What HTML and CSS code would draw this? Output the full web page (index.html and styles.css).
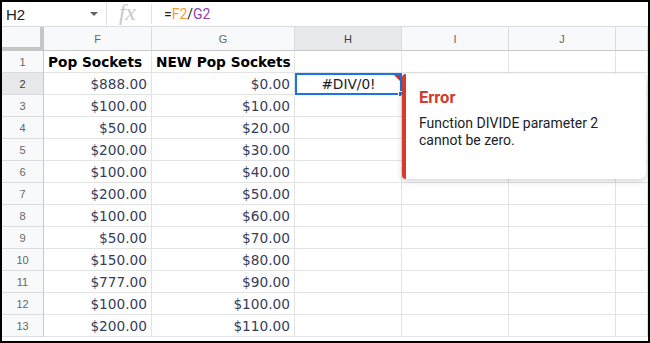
FILE: index.html
```html
<!DOCTYPE html>
<html lang="en">
<head>
    <meta charset="UTF-8">
    <title>Sheet - DIV/0 error</title>
    <link rel="stylesheet" href="styles.css">
</head>
<body>
    <div class="frame">
        <!-- Formula bar -->
        <div class="formula-bar">
            <div class="name-box">
                <span>H2</span>
                <span class="caret"></span>
            </div>
            <div class="fx">fx</div>
            <div class="formula">=<span class="ref-f">F2</span>/<span class="ref-g">G2</span></div>
        </div>

        <!-- Grid -->
        <div class="grid-wrap">
            <div class="grid">
                <div class="corner"></div>
                <div class="col-head">F</div>
                <div class="col-head">G</div>
                <div class="col-head active">H</div>
                <div class="col-head">I</div>
                <div class="col-head">J</div>
                <div class="col-head"></div>

                <div class="row-head">1</div>
                <div class="cell bold">Pop Sockets</div>
                <div class="cell bold">NEW Pop Sockets</div>
                <div class="cell"></div><div class="cell"></div><div class="cell"></div><div class="cell"></div>

                <div class="row-head active">2</div>
                <div class="cell num">$888.00</div>
                <div class="cell num">$0.00</div>
                <div class="cell selected">#DIV/0!<span class="err-mark"></span><span class="handle"></span></div>
                <div class="cell"></div><div class="cell"></div><div class="cell"></div>

                <div class="row-head">3</div>
                <div class="cell num">$100.00</div><div class="cell num">$10.00</div>
                <div class="cell"></div><div class="cell"></div><div class="cell"></div><div class="cell"></div>

                <div class="row-head">4</div>
                <div class="cell num">$50.00</div><div class="cell num">$20.00</div>
                <div class="cell"></div><div class="cell"></div><div class="cell"></div><div class="cell"></div>

                <div class="row-head">5</div>
                <div class="cell num">$200.00</div><div class="cell num">$30.00</div>
                <div class="cell"></div><div class="cell"></div><div class="cell"></div><div class="cell"></div>

                <div class="row-head">6</div>
                <div class="cell num">$100.00</div><div class="cell num">$40.00</div>
                <div class="cell"></div><div class="cell"></div><div class="cell"></div><div class="cell"></div>

                <div class="row-head">7</div>
                <div class="cell num">$200.00</div><div class="cell num">$50.00</div>
                <div class="cell"></div><div class="cell"></div><div class="cell"></div><div class="cell"></div>

                <div class="row-head">8</div>
                <div class="cell num">$100.00</div><div class="cell num">$60.00</div>
                <div class="cell"></div><div class="cell"></div><div class="cell"></div><div class="cell"></div>

                <div class="row-head">9</div>
                <div class="cell num">$50.00</div><div class="cell num">$70.00</div>
                <div class="cell"></div><div class="cell"></div><div class="cell"></div><div class="cell"></div>

                <div class="row-head">10</div>
                <div class="cell num">$150.00</div><div class="cell num">$80.00</div>
                <div class="cell"></div><div class="cell"></div><div class="cell"></div><div class="cell"></div>

                <div class="row-head">11</div>
                <div class="cell num">$777.00</div><div class="cell num">$90.00</div>
                <div class="cell"></div><div class="cell"></div><div class="cell"></div><div class="cell"></div>

                <div class="row-head">12</div>
                <div class="cell num">$100.00</div><div class="cell num">$100.00</div>
                <div class="cell"></div><div class="cell"></div><div class="cell"></div><div class="cell"></div>

                <div class="row-head">13</div>
                <div class="cell num">$200.00</div><div class="cell num">$110.00</div>
                <div class="cell"></div><div class="cell"></div><div class="cell"></div><div class="cell"></div>
            </div>

            <!-- Error tooltip -->
            <div class="error-popup">
                <div class="error-title">Error</div>
                <div class="error-text">Function DIVIDE parameter 2<br>cannot be zero.</div>
            </div>
        </div>
    </div>
</body>
</html>
```

FILE: styles.css
```css
* {
    margin: 0;
    padding: 0;
    box-sizing: border-box;
}

body {
    width: 650px;
    height: 343px;
    overflow: hidden;
    background-color: #000;
    font-family: "Liberation Sans", Arial, sans-serif;
}

.frame {
    width: 650px;
    height: 343px;
    border: 2px solid #000;
    background-color: #fff;
    overflow: hidden;
}

/* Formula bar */
.formula-bar {
    display: flex;
    align-items: center;
    height: 25px;
    border-bottom: 1px solid #dadce0;
    background-color: #fff;
}

.name-box {
    display: flex;
    align-items: center;
    justify-content: space-between;
    width: 105px;
    height: 100%;
    padding: 0 8px 0 4px;
    border-right: 1px solid #e3e3e3;
    font-size: 15px;
    color: #202124;
}

.caret {
    width: 0;
    height: 0;
    border-left: 4px solid transparent;
    border-right: 4px solid transparent;
    border-top: 4px solid #5f6368;
}

.fx {
    width: 45px;
    height: 20px;
    line-height: 18px;
    padding-left: 12px;
    border-right: 1px solid #e3e3e3;
    font-family: "Liberation Serif", serif;
    font-style: italic;
    font-size: 23px;
    color: #c8c8c8;
}

.formula {
    padding-left: 12px;
    font-family: Roboto, sans-serif;
    font-size: 14px;
    color: #202124;
}

.ref-f {
    color: #f29d38;
}

.ref-g {
    color: #8e44ad;
}

/* Grid */
.grid-wrap {
    position: relative;
}

.grid {
    display: grid;
    grid-template-columns: 42px 108px 143px 107px 107px 107px 1fr;
    grid-template-rows: 24px;
    grid-auto-rows: 22px;
}

.corner {
    background-color: #f8f9fa;
    border-right: 4px solid #c4c7c5;
    border-bottom: 4px solid #c4c7c5;
}

.col-head {
    display: flex;
    align-items: center;
    justify-content: center;
    background-color: #f8f9fa;
    border-right: 1px solid #dcdcdc;
    border-bottom: 1px solid #c8c8c8;
    font-family: "Liberation Sans", Arial, sans-serif;
    font-size: 11px;
    color: #666;
}

.row-head {
    display: flex;
    align-items: center;
    justify-content: center;
    background-color: #f8f9fa;
    border-right: 1px solid #c8c8c8;
    border-bottom: 1px solid #dcdcdc;
    font-family: "Liberation Sans", Arial, sans-serif;
    font-size: 11px;
    color: #666;
}

.col-head.active,
.row-head.active {
    background-color: #e6e8ea;
    color: #3c4043;
}

.cell {
    position: relative;
    display: flex;
    align-items: center;
    padding: 0 4px;
    border-right: 1px solid #e2e3e3;
    border-bottom: 1px solid #e2e3e3;
    font-family: "DejaVu Sans", Verdana, sans-serif;
    font-size: 13.7px;
    color: #363d5a;
    white-space: nowrap;
}

.cell.bold {
    font-weight: bold;
    color: #000;
}

.cell.num {
    justify-content: flex-end;
}

.cell.selected {
    justify-content: center;
    border: 2px solid #1a73e8;
    color: #202124;
}

.err-mark {
    position: absolute;
    top: 0;
    right: 0;
    width: 0;
    height: 0;
    border-top: 6px solid #d93025;
    border-left: 6px solid transparent;
}

.handle {
    position: absolute;
    right: -4px;
    bottom: -4px;
    width: 6px;
    height: 6px;
    background-color: #1a73e8;
    border: 1px solid #fff;
}

/* Error popup */
.error-popup {
    position: absolute;
    left: 400px;
    top: 47px;
    width: 244px;
    height: 105px;
    padding: 14px 16px 0 13px;
    background-color: #fff;
    border-left: 4px solid #d33b2c;
    border-radius: 4px 7px 7px 4px;
    box-shadow: 0 2px 6px rgba(0, 0, 0, 0.18);
    font-family: Roboto, sans-serif;
}

.error-title {
    font-size: 16.5px;
    font-weight: bold;
    color: #d33b2c;
    margin-bottom: 8px;
}

.error-text {
    font-size: 14px;
    line-height: 17px;
    color: #202124;
}
```
